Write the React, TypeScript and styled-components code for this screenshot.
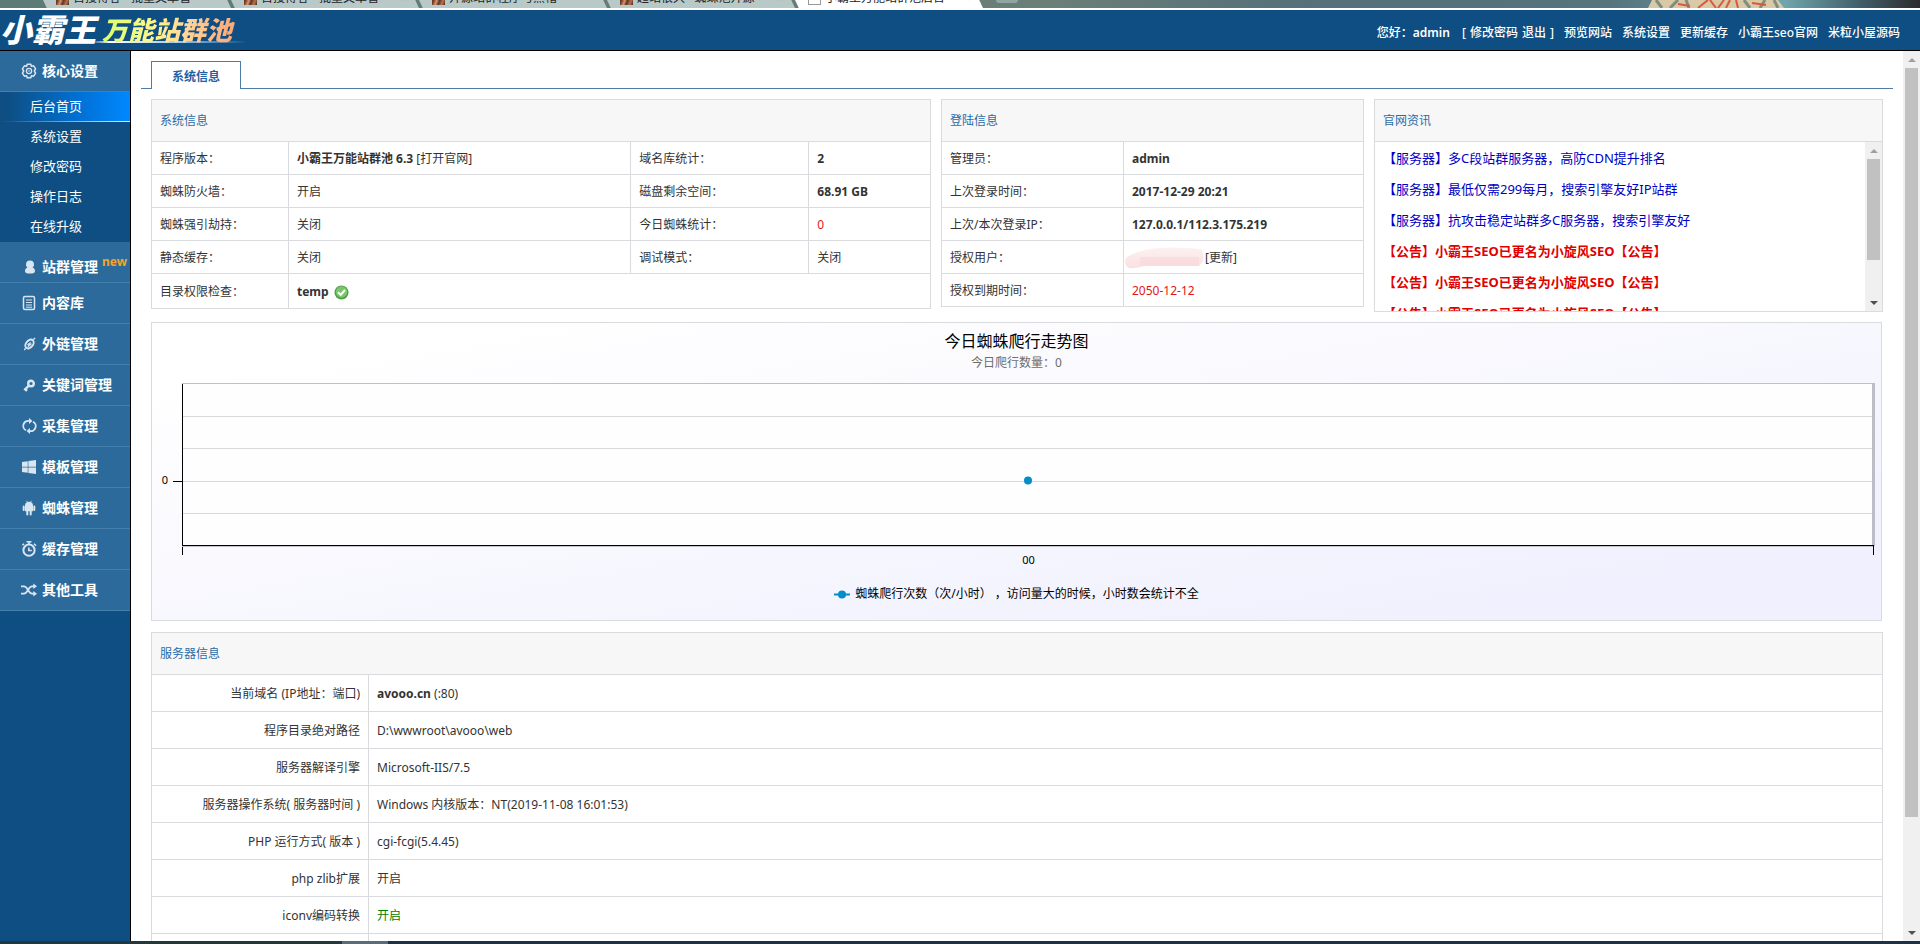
import React from "react";
import styled, { createGlobalStyle, css } from "styled-components";
import { FaWindows } from "react-icons/fa";

const line = "#dadbde";
const navy = "#0e4e82";
const titleBlue = "#2a6ba8";

const GlobalStyle = createGlobalStyle`
  *, *::before, *::after { box-sizing: border-box; }
  body {
    margin: 0;
    background: #fff;
    color: #333;
    font-family: "Noto Sans", "Noto Sans CJK SC", sans-serif;
    font-size: 12px;
    line-height: 20px;
  }
  a { color: inherit; text-decoration: none; }
  ul { list-style: none; margin: 0; padding: 0; }
  h1, h2, h3, p { margin: 0; font-weight: 400; }
  button { font: inherit; border: 0; padding: 0; background: none; cursor: pointer; }
`;

const Page = styled.div`
  display: flex;
  flex-direction: column;
  height: 100vh;
  overflow: hidden;
`;

/* Browser tab strip */

const TabStrip = styled.div`
  display: flex;
  flex: none;
  height: 10px;
  padding-left: 43px;
  overflow: hidden;
  border-bottom: 2px solid #fff;
  background: linear-gradient(90deg, #5c7a76 0%, #6b7e78 55%, #55707a 68%, #55747e 84%, #6fa5ab 93%, #3f5c68 97%, #2b2b2c 100%);
`;

const BrowserTab = styled.div<{ $active?: boolean }>`
  display: flex;
  align-items: flex-end;
  flex: none;
  gap: 4px;
  width: 188px;
  height: 8px;
  padding: 0 12px 3px 13px;
  overflow: hidden;
  clip-path: polygon(0 0, 98% 0, 100% 100%, 2% 100%);
  background: ${(p) => (p.$active ? "#fff" : "#b8c9c8")};
  color: #222;
  line-height: 14px;
`;

const BrowserTabText = styled.span`
  flex: 1;
  overflow: hidden;
  white-space: nowrap;
`;

const Favicon = styled.span<{ $blank?: boolean }>`
  flex: none;
  width: 13px;
  height: 13px;
  ${(p) =>
    p.$blank
      ? css`border: 1px solid #999; background: #fff;`
      : css`background: linear-gradient(110deg, #6b3a28 25%, #d9936a 45%, #54382c 60%, #c2704a 80%, #33302c);`}
`;

const NewTab = styled.span`
  width: 22px;
  height: 3px;
  margin-left: 13px;
  border-radius: 0 0 4px 4px;
  background: #8fa5a2;
`;

const Wallpaper = styled.svg`
  width: 136px;
  height: 8px;
  margin-left: auto;
  margin-right: 136px;
`;

/* Header */

const Header = styled.header`
  display: flex;
  flex: none;
  justify-content: space-between;
  height: 41px;
  padding-right: 20px;
  border-bottom: 1px solid #000;
  background: ${navy};
  color: #fff;
`;

const Logo = styled.h1`
  display: flex;
  align-items: center;
  gap: 6px;
  font-style: italic;
  font-weight: 900;
  line-height: 40px;
  background: linear-gradient(90deg, transparent 90px, #fff 110px, #9fc4e4 180px, transparent) 0 31px / 248px 2px no-repeat;
`;

const LogoName = styled.span`
  font-size: 32px;
`;

const LogoProduct = styled.span`
  padding-right: 12px;
  font-size: 26px;
  background: linear-gradient(90deg, #d8ff70, #fff78a 35%, #ffd59a 60%, #ff9c6c);
  background-clip: text;
  color: transparent;
`;

const TopNav = styled.nav`
  display: flex;
  align-items: center;
  gap: 10px;
  padding-top: 6px;
  font-weight: 500;
`;

const Account = styled.span`
  display: flex;
  gap: 4px;
`;

const Greeting = styled.span`
  margin-right: 8px;

  strong { font-weight: 600; }
`;

/* Body */

const Body = styled.div`
  display: flex;
  flex: 1;
  min-height: 0;
`;

const Sidebar = styled.aside`
  flex: none;
  width: 131px;
  border-right: 1px solid #000;
  background: ${navy};
  color: #fff;
`;

const Group = styled.button<{ $low?: boolean }>`
  display: flex;
  align-items: center;
  gap: 4px;
  width: 100%;
  height: 41px;
  padding: ${(p) => (p.$low ? "10px" : "0")} 0 0 20px;
  border-bottom: 1px solid #4380ad;
  background: #2c6a9b;
  color: #fff;
  font-size: 14px;
  font-weight: 700;
  white-space: nowrap;

  svg {
    flex: none;
    width: 18px;
    height: 16px;
    color: #d9e6f2;
  }
`;

const NewMark = styled.sup`
  align-self: flex-start;
  color: #f7a32c;
  font-size: 12px;
  line-height: 20px;
`;

const SubItem = styled.a<{ $active?: boolean }>`
  display: block;
  height: 30px;
  padding-left: 30px;
  font-size: 13px;
  line-height: 28px;
  ${(p) =>
    p.$active &&
    css`
      background:
        linear-gradient(90deg, transparent, #d5ebff) 0 100% / 100% 1px no-repeat,
        linear-gradient(90deg, ${navy} 5%, #0070d4 60%, #0088ff);
    `}
`;

const Content = styled.main`
  flex: 1;
  min-width: 0;
  overflow: hidden;
  padding-top: 10px;
`;

const TabBar = styled.div`
  display: flex;
  height: 28px;
  margin: 0 10px;
  padding-left: 10px;
  border-bottom: 1px solid #4f7ba8;
`;

const Tab = styled.button`
  height: 28px;
  padding: 2px 20px 0;
  border: 1px solid #4f7ba8;
  border-bottom: 0;
  background: #fff;
  color: #1f60a4;
  font-weight: 700;
`;

const Panels = styled.div`
  padding: 10px 20px 0;
`;

const TopPanels = styled.div`
  display: grid;
  grid-template-columns: 780fr 423fr 509fr;
  align-items: start;
  gap: 10px;
`;

const Panel = styled.section`
  min-width: 0;
  border: 1px solid ${line};
  background: #fff;
`;

const PanelTitle = styled.h2`
  height: 42px;
  padding-left: 8px;
  border-bottom: 1px solid ${line};
  background: #f7f7f7;
  color: ${titleBlue};
  font-size: 12px;
  line-height: 41px;
`;

const InfoTable = styled.table`
  width: 100%;
  border-spacing: 0;
  table-layout: fixed;

  th, td {
    height: 33px;
    padding: 2px 8px 0;
    border-bottom: 1px solid ${line};
    font-weight: 400;
    text-align: left;
    white-space: nowrap;
  }
  th:not(:first-child), td { border-left: 1px solid ${line}; }
  tr:last-child > * { height: 32px; border-bottom: 0; }
`;

const SystemTable = styled(InfoTable)`
  tr:last-child > * { height: 34px; }
`;

const ServerTable = styled(InfoTable)`
  th, td { height: 37px; }
  th { text-align: right; }
`;

const Col = styled.col<{ $w: string }>`
  width: ${(p) => p.$w};
`;

const Value = styled.span<{ $color: string }>`
  color: ${(p) => p.$color};
`;

const IconText = styled.span`
  display: inline-flex;
  align-items: center;
  gap: 5px;
`;

const LicenseUser = styled.span`
  display: flex;
  align-items: center;
  height: 20px;
  margin-left: -8px;
`;

/* News */

const NewsBody = styled.div`
  display: flex;
  height: 169px;
`;

const NewsList = styled.ul`
  flex: 1;
  padding: 1px 0 0 8px;
  overflow: hidden;
`;

const NewsItem = styled.li<{ $notice?: boolean }>`
  height: 31px;
  color: ${(p) => (p.$notice ? "#e00000" : "#0000c4")};
  font-size: 13px;
  font-weight: ${(p) => (p.$notice ? 700 : 400)};
  line-height: 30px;
  white-space: nowrap;
`;

const Track = styled.div`
  display: flex;
  flex: none;
  flex-direction: column;
  align-items: center;
  width: 17px;
  background: #f0f0f0;
`;

const Arrow = styled.span<{ $down?: boolean }>`
  display: flex;
  flex: none;
  align-items: center;
  justify-content: center;
  height: 17px;

  &::before {
    content: "";
    border: 4px solid transparent;
    ${(p) =>
      p.$down
        ? css`border-top-color: #505050; border-bottom: 0;`
        : css`border-bottom-color: #a0a0a0; border-top: 0;`}
  }
`;

const ThumbSpace = styled.div`
  flex: 1;
  width: 13px;
`;

const Thumb = styled.div<{ $size: string }>`
  height: ${(p) => p.$size};
  background: #c1c1c1;
`;

/* Chart */

const Chart = styled.section`
  display: flex;
  flex-direction: column;
  height: 299px;
  margin: 10px 1px 11px 0;
  padding-top: 6px;
  border: 1px solid ${line};
  background: linear-gradient(170deg, #fff 10%, #f0f0fe 90%);
  color: #000;
`;

const ChartTitle = styled.h2`
  font-size: 16px;
  line-height: 24px;
  text-align: center;
`;

const ChartSubtitle = styled.p`
  color: #6d6d6d;
  line-height: 20px;
  text-align: center;
`;

const PlotRow = styled.div`
  display: flex;
  align-items: center;
  margin-top: 10px;
  padding-right: 8px;
`;

const YLabel = styled.span`
  width: 21px;
  padding: 0 5px 0 0;
  margin-top: 20px;
  font-size: 11px;
  text-align: right;
`;

const Plot = styled.svg`
  flex: 1;
  min-width: 0;
  height: 173px;
  overflow: visible;
`;

const XLabel = styled.span`
  padding-left: 24px;
  margin-top: -6px;
  font-size: 11px;
  text-align: center;
`;

const Legend = styled.p`
  display: flex;
  align-items: center;
  justify-content: center;
  gap: 5px;
  margin-top: 14px;
  text-spacing-trim: space-all;
`;

const Taskbar = styled.footer`
  flex: none;
  height: 3px;
  background: linear-gradient(90deg, #22383f 342px, #5b6b78 342px 388px, #1d3244 388px);
`;

/* Drawings */

const GearIcon = () => (
  <svg viewBox="0 0 18 16" fill="none" stroke="currentColor" strokeLinejoin="round">
    <path
      d="M7.200 1.200h3.600l.6 2 2.200-.4 2 3-1.300 2.200 1.300 2.200-2 3-2.200-.4-.6 2H7.200l-.6-2-2.200.4-2-3L3.700 8 2.400 5.800l2-3 2.200.4z"
      strokeWidth="1.500"
    />
    <circle cx="9" cy="8" r="2.600" strokeWidth="1.300" />
    <circle cx="9" cy="8" r=".8" fill="currentColor" stroke="none" />
  </svg>
);

const PawnIcon = () => (
  <svg viewBox="0 0 18 16" fill="currentColor">
    <path d="M10 1.500c2.600 0 4 1.700 4 3.900 0 1.300-.6 2.400-1.500 3.200 1.500.6 2.500 1.600 2.500 3.300 0 1.900-1.500 2.600-5 2.600s-5-.7-5-2.600c0-1.700 1-2.700 2.500-3.300C6.600 7.800 6 6.700 6 5.400c0-2.200 1.400-3.900 4-3.900z" />
  </svg>
);

const DocIcon = () => (
  <svg viewBox="0 0 18 16" fill="none" stroke="currentColor">
    <rect x="3.500" y="1.500" width="11" height="13" rx="1.500" strokeWidth="1.500" />
    <path d="M6 5h6M6 7.500h6M6 10h6M6 12.200h6" />
  </svg>
);

const LinkIcon = () => (
  <svg viewBox="0 0 18 16" fill="none" stroke="currentColor" strokeWidth="2">
    <ellipse cx="9.500" cy="8" rx="5" ry="3.400" transform="rotate(-50 9.500 8)" />
    <path d="M5.500 12.500L4.300 14M13.500 3.500L15 2" strokeWidth="1.500" />
    <path d="M7.500 8.500l3-2-1 2.300 2-.8-3.500 3 .8-2.300z" strokeWidth="1" fill="currentColor" />
  </svg>
);

const KeyIcon = () => (
  <svg viewBox="0 0 18 16" fill="none" stroke="currentColor">
    <circle cx="11" cy="6.500" r="2.800" strokeWidth="2.400" />
    <path d="M9 8.500L4.300 13.200M5 12l2 1.800" strokeWidth="2.400" />
  </svg>
);

const SyncIcon = () => (
  <svg viewBox="0 0 18 16" fill="none" stroke="currentColor" strokeWidth="1.800">
    <path d="M6 12.300A5 5 0 0 1 9.500 3M13 3.700A5 5 0 0 1 9.500 13" />
    <path d="M9 0l3.500 3L9 6zM10 10l-3.500 3 3.500 3z" fill="currentColor" stroke="none" />
  </svg>
);

const AndroidIcon = () => (
  <svg viewBox="0 0 18 16" fill="currentColor" stroke="currentColor">
    <path d="M5 5.500C5 3 6.700 1.800 9 1.800S13 3 13 5.500v5.800H5z" stroke="none" />
    <path d="M6.500.8l1 1.500M11.500.8l-1 1.500" strokeWidth=".8" />
    <path d="M3.700 6.500v3.500M14.300 6.500v3.500M7.300 11v3.500M10.700 11v3.500" strokeWidth="2" strokeLinecap="round" />
  </svg>
);

const StopwatchIcon = () => (
  <svg viewBox="0 0 18 16" fill="none" stroke="currentColor" strokeWidth="2">
    <circle cx="9" cy="9.200" r="5.600" />
    <path d="M6.500.8h5M9 1v3M14 2.800l2 2M4 2.800l-1.500 1.500" strokeWidth="1.600" />
    <path d="M8.800 6.500v3h3" strokeWidth="1.600" />
  </svg>
);

const ShuffleIcon = () => (
  <svg viewBox="0 0 18 16" fill="none" stroke="currentColor" strokeWidth="1.700">
    <path d="M1 4.300h3c3.800 0 4.200 7.400 8 7.400h2M1 11.700h3c3.800 0 4.200-7.400 8-7.400h2" />
    <path d="M13.300 1.500L17 4.300l-3.700 2.800zM13.300 8.900l3.700 2.800-3.700 2.800z" fill="currentColor" stroke="none" />
  </svg>
);

const CheckIcon = () => (
  <svg width="15" height="15" viewBox="0 0 15 15" role="img" aria-label="正常">
    <circle cx="7.500" cy="7.500" r="7" fill="#4c9d45" />
    <circle cx="7.500" cy="7" r="5.800" fill="#7cc56c" />
    <path d="M4 7.300l2.700 2.600L11 5" fill="none" stroke="#fff" strokeWidth="2" />
  </svg>
);

const Smudge = () => (
  <svg width="81" height="24" viewBox="0 0 82 24" aria-hidden="true">
    <defs>
      <linearGradient id="smudge" x2="0" y2="1">
        <stop offset="0" stopColor="#fcf2f1" />
        <stop offset="1" stopColor="#fbdfe1" />
      </linearGradient>
    </defs>
    <path d="M3 11Q18 2 40 1.500T78 3Q82 8 80 15L76 20H20Q8 24 3 21Q-1 15 3 11z" fill="url(#smudge)" />
    <rect x="16" y="11" width="60" height="9" fill="#fad9db" opacity=".7" />
  </svg>
);

const gridLines = [33, 65, 98, 130];

const TrendPlot = () => (
  <Plot role="img" aria-label="今日蜘蛛爬行走势图">
    <rect x="9" y="0" width="calc(100% - 9px)" height="163" fill="#fefeff" />
    <g shapeRendering="crispEdges">
      <line x1="9" x2="100%" y1="0.5" y2="0.5" stroke="#bfbfc6" />
      {gridLines.map((y) => (
        <line key={y} x1="9" x2="100%" y1={y + 0.5} y2={y + 0.5} stroke="#d9d9dc" />
      ))}
      <line x1="100%" x2="100%" y1="0" y2="163" stroke="#bdbdc8" strokeWidth="3" />
      <path d="M9.500 1v171M0 98.500h9" stroke="#000" />
      <line x1="9" x2="100%" y1="163.500" y2="163.500" stroke="#c4c4cc" />
      <line x1="9" x2="100%" y1="162.500" y2="162.500" stroke="#000" />
      <line x1="100%" x2="100%" y1="162" y2="172" stroke="#000" />
    </g>
    <g transform="translate(5 0)">
      <circle cx="50%" cy="97.500" r="4" fill="#058dc7" />
    </g>
  </Plot>
);

const LegendMark = () => (
  <svg width="16" height="9" aria-hidden="true">
    <path d="M0 4.500h16" stroke="#058dc7" strokeWidth="2" />
    <circle cx="8" cy="4.500" r="4" fill="#058dc7" />
  </svg>
);

/* Data */

const browserTabs = [
  "百搜博客 - 批量文章管",
  "百搜博客 - 批量文章管",
  "开源站群程序与黑帽",
  "超站很久 · 蜘蛛池开源",
];

const headerLinks = ["预览网站", "系统设置", "更新缓存", "小霸王seo官网", "米粒小屋源码"];

const coreItems = ["后台首页", "系统设置", "修改密码", "操作日志", "在线升级"];

const groups: { label: string; icon: React.ReactNode; isNew?: boolean }[] = [
  { label: "站群管理", icon: <PawnIcon />, isNew: true },
  { label: "内容库", icon: <DocIcon /> },
  { label: "外链管理", icon: <LinkIcon /> },
  { label: "关键词管理", icon: <KeyIcon /> },
  { label: "采集管理", icon: <SyncIcon /> },
  { label: "模板管理", icon: <FaWindows /> },
  { label: "蜘蛛管理", icon: <AndroidIcon /> },
  { label: "缓存管理", icon: <StopwatchIcon /> },
  { label: "其他工具", icon: <ShuffleIcon /> },
];

const systemRows: [string, React.ReactNode, string, React.ReactNode][] = [
  ["程序版本：", <><b>小霸王万能站群池 6.3</b> <a href="#site">[打开官网]</a></>, "域名库统计：", <b>2</b>],
  ["蜘蛛防火墙：", "开启", "磁盘剩余空间：", <b>68.91 GB</b>],
  ["蜘蛛强引劫持：", "关闭", "今日蜘蛛统计：", <Value $color="#e01818">0</Value>],
  ["静态缓存：", "关闭", "调试模式：", "关闭"],
];

const loginRows: [string, React.ReactNode][] = [
  ["管理员：", <b>admin</b>],
  ["上次登录时间：", <b>2017-12-29 20:21</b>],
  ["上次/本次登录IP：", <b>127.0.0.1/112.3.175.219</b>],
  ["授权用户：", <LicenseUser><Smudge /><a href="#renew">[更新]</a></LicenseUser>],
  ["授权到期时间：", <Value $color="#e01818">2050-12-12</Value>],
];

const news = [
  { text: "【服务器】多C段站群服务器，高防CDN提升排名" },
  { text: "【服务器】最低仅需299每月，搜索引擎友好IP站群" },
  { text: "【服务器】抗攻击稳定站群多C服务器，搜索引擎友好" },
  { text: "【公告】小霸王SEO已更名为小旋风SEO【公告】", notice: true },
  { text: "【公告】小霸王SEO已更名为小旋风SEO【公告】", notice: true },
  { text: "【公告】小霸王SEO已更名为小旋风SEO【公告】", notice: true },
];

const serverRows: [string, React.ReactNode][] = [
  ["当前域名 (IP地址：端口)", <><b>avooo.cn</b> (:80)</>],
  ["程序目录绝对路径", "D:\\wwwroot\\avooo\\web"],
  ["服务器解译引擎", "Microsoft-IIS/7.5"],
  ["服务器操作系统( 服务器时间 )", "Windows 内核版本：NT(2019-11-08 16:01:53)"],
  ["PHP 运行方式( 版本 )", "cgi-fcgi(5.4.45)"],
  ["php zlib扩展", "开启"],
  ["iconv编码转换", <Value $color="#008000">开启</Value>],
  ["", ""],
];

const ScrollTrack = ({ size }: { size: string }) => (
  <Track aria-hidden="true">
    <Arrow />
    <ThumbSpace>
      <Thumb $size={size} />
    </ThumbSpace>
    <Arrow $down />
  </Track>
);

export default function App() {
  return (
    <Page lang="zh-CN">
      <GlobalStyle />
      <TabStrip>
        {browserTabs.map((text, i) => (
          <BrowserTab key={i}>
            <Favicon />
            <BrowserTabText>{text}</BrowserTabText>
            <span>×</span>
          </BrowserTab>
        ))}
        <BrowserTab $active>
          <Favicon $blank />
          <BrowserTabText>小霸王万能站群池后台</BrowserTabText>
          <span>×</span>
        </BrowserTab>
        <NewTab />
        <Wallpaper viewBox="0 0 136 8" preserveAspectRatio="none" aria-hidden="true">
          <path d="M4 0h126l6 8H0z" fill="#d9c9a6" />
          <path d="M8 0l6 8M22 8l8-8M38 0l3 8M96 0l6 8M112 8l5-8M126 0l4 8" stroke="#7e8f80" strokeWidth="3" />
          <path d="M50 8l10-8M62 0l6 8M70 8l6-8M82 0l-4 8M88 0l2 8M30 4l12 2M104 3l14 2" stroke="#d9593c" strokeWidth="2" />
        </Wallpaper>
      </TabStrip>

      <Header>
        <Logo>
          <LogoName>小霸王</LogoName>
          <LogoProduct>万能站群池</LogoProduct>
        </Logo>
        <TopNav>
          <Account>
            <Greeting>您好：<strong>admin</strong></Greeting>
            <span>[</span>
            <a href="#password">修改密码</a>
            <a href="#logout">退出</a>
            <span>]</span>
          </Account>
          {headerLinks.map((label) => (
            <a key={label} href="#top">{label}</a>
          ))}
        </TopNav>
      </Header>

      <Body>
        <Sidebar>
          <Group>
            <GearIcon />
            核心设置
          </Group>
          <nav>
            {coreItems.map((label, i) => (
              <SubItem key={label} href="#menu" $active={i === 0}>{label}</SubItem>
            ))}
          </nav>
          {groups.map(({ label, icon, isNew }) => (
            <Group key={label} $low={isNew}>
              {icon}
              {label}
              {isNew && <NewMark>new</NewMark>}
            </Group>
          ))}
        </Sidebar>

        <Content>
          <TabBar>
            <Tab>系统信息</Tab>
          </TabBar>
          <Panels>
            <TopPanels>
              <Panel>
                <PanelTitle>系统信息</PanelTitle>
                <SystemTable>
                  <colgroup>
                    <Col $w="136px" />
                    <Col $w="44%" />
                    <Col $w="178px" />
                    <Col $w="auto" />
                  </colgroup>
                  <tbody>
                    {systemRows.map(([a, b, c, d]) => (
                      <tr key={a}>
                        <th scope="row">{a}</th>
                        <td>{b}</td>
                        <th scope="row">{c}</th>
                        <td>{d}</td>
                      </tr>
                    ))}
                    <tr>
                      <th scope="row">目录权限检查：</th>
                      <td colSpan={3}>
                        <IconText><b>temp</b><CheckIcon /></IconText>
                      </td>
                    </tr>
                  </tbody>
                </SystemTable>
              </Panel>

              <Panel>
                <PanelTitle>登陆信息</PanelTitle>
                <InfoTable>
                  <colgroup>
                    <Col $w="181px" />
                    <Col $w="auto" />
                  </colgroup>
                  <tbody>
                    {loginRows.map(([label, value]) => (
                      <tr key={label}>
                        <th scope="row">{label}</th>
                        <td>{value}</td>
                      </tr>
                    ))}
                  </tbody>
                </InfoTable>
              </Panel>

              <Panel>
                <PanelTitle>官网资讯</PanelTitle>
                <NewsBody>
                  <NewsList>
                    {news.map(({ text, notice }, i) => (
                      <NewsItem key={i} $notice={notice}><a href="#news">{text}</a></NewsItem>
                    ))}
                  </NewsList>
                  <ScrollTrack size="75%" />
                </NewsBody>
              </Panel>
            </TopPanels>

            <Chart>
              <ChartTitle>今日蜘蛛爬行走势图</ChartTitle>
              <ChartSubtitle>今日爬行数量：0</ChartSubtitle>
              <PlotRow>
                <YLabel>0</YLabel>
                <TrendPlot />
              </PlotRow>
              <XLabel>00</XLabel>
              <Legend>
                <LegendMark />
                <span>蜘蛛爬行次数（次/小时） ，访问量大的时候，小时数会统计不全</span>
              </Legend>
            </Chart>

            <Panel>
              <PanelTitle>服务器信息</PanelTitle>
              <ServerTable>
                <colgroup>
                  <Col $w="216px" />
                  <Col $w="auto" />
                </colgroup>
                <tbody>
                  {serverRows.map(([label, value], i) => (
                    <tr key={i}>
                      <th scope="row">{label}</th>
                      <td>{value}</td>
                    </tr>
                  ))}
                </tbody>
              </ServerTable>
            </Panel>
          </Panels>
        </Content>
        <ScrollTrack size="87.5%" />
      </Body>
      <Taskbar />
    </Page>
  );
}
